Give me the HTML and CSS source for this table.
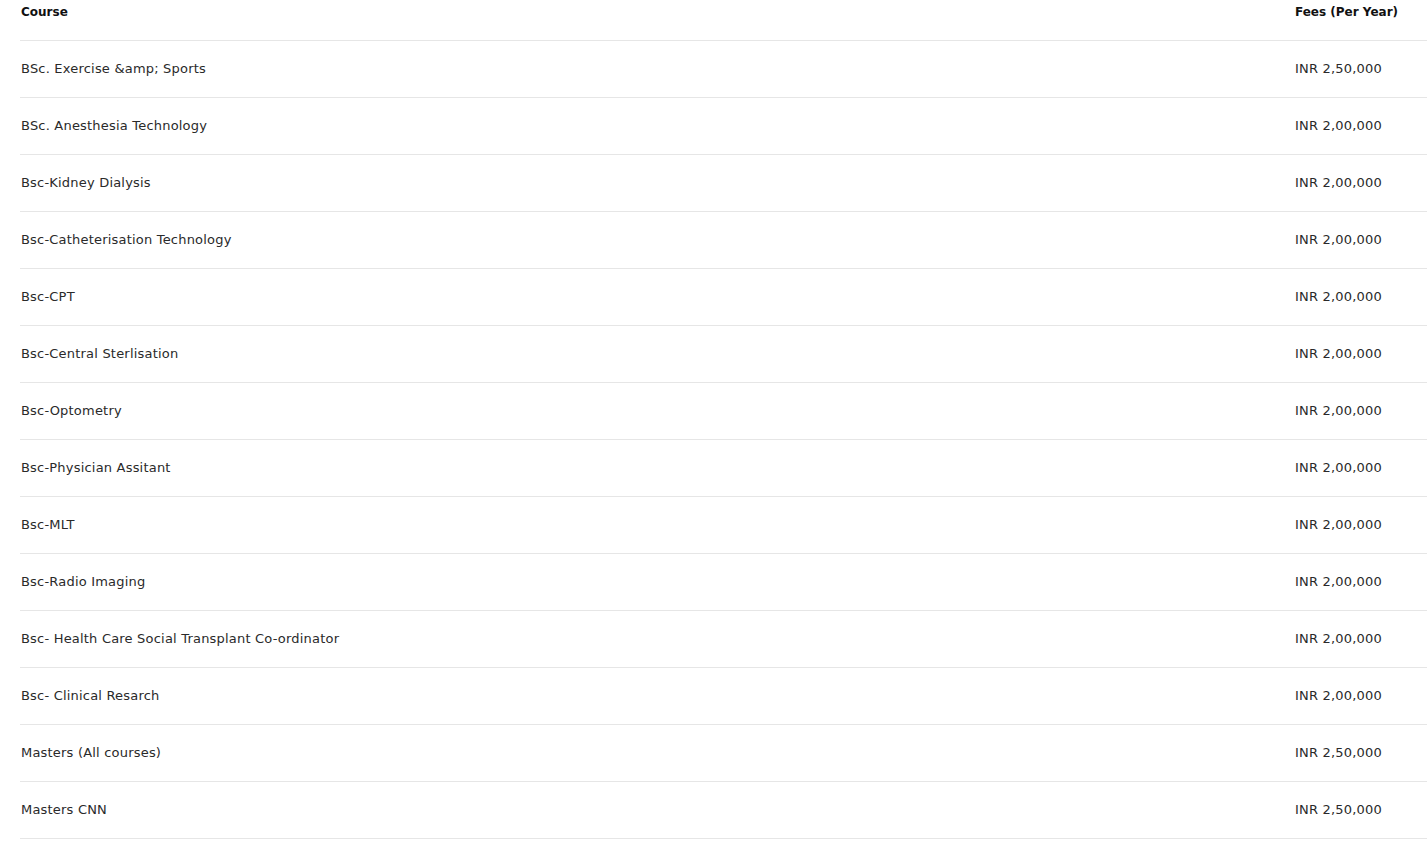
FILE: index.html
```html
<!DOCTYPE html>
<html>
<head>
<meta charset="utf-8">
<link rel="stylesheet" href="styles.css">
</head>
<body>
<div class="fees-table">
  <div class="row head"><div class="c1">Course</div><div class="c2">Fees (Per Year)</div></div>
  <div class="row"><div class="c1">BSc. Exercise &amp;amp; Sports</div><div class="c2">INR 2,50,000</div></div>
  <div class="row"><div class="c1">BSc. Anesthesia Technology</div><div class="c2">INR 2,00,000</div></div>
  <div class="row"><div class="c1">Bsc-Kidney Dialysis</div><div class="c2">INR 2,00,000</div></div>
  <div class="row"><div class="c1">Bsc-Catheterisation Technology</div><div class="c2">INR 2,00,000</div></div>
  <div class="row"><div class="c1">Bsc-CPT</div><div class="c2">INR 2,00,000</div></div>
  <div class="row"><div class="c1">Bsc-Central Sterlisation</div><div class="c2">INR 2,00,000</div></div>
  <div class="row"><div class="c1">Bsc-Optometry</div><div class="c2">INR 2,00,000</div></div>
  <div class="row"><div class="c1">Bsc-Physician Assitant</div><div class="c2">INR 2,00,000</div></div>
  <div class="row"><div class="c1">Bsc-MLT</div><div class="c2">INR 2,00,000</div></div>
  <div class="row"><div class="c1">Bsc-Radio Imaging</div><div class="c2">INR 2,00,000</div></div>
  <div class="row"><div class="c1">Bsc- Health Care Social Transplant Co-ordinator</div><div class="c2">INR 2,00,000</div></div>
  <div class="row"><div class="c1">Bsc- Clinical Resarch</div><div class="c2">INR 2,00,000</div></div>
  <div class="row"><div class="c1">Masters (All courses)</div><div class="c2">INR 2,50,000</div></div>
  <div class="row"><div class="c1">Masters CNN</div><div class="c2">INR 2,50,000</div></div>
</div>
</body>
</html>
```
FILE: styles.css
```css
html, body { margin: 0; padding: 0; background: #fff; overflow: hidden; }
body { font-family: "DejaVu Sans", sans-serif; font-size: 13px; letter-spacing: 0.2px; color: #2a2a2a; }
.fees-table { margin-left: 20px; }
.row {
  display: grid;
  grid-template-columns: 1274px 1fr;
  align-items: center;
  height: 56px;
  border-bottom: 1px solid #e6e6e6;
}
.c1, .c2 { padding-left: 1px; line-height: 16px; }
.row.head { align-items: start; padding-top: 4px; box-sizing: border-box; height: 41px; }
.row.head .c1, .row.head .c2 { font-size: 12px; letter-spacing: 0; font-weight: bold; color: #111; }
```
